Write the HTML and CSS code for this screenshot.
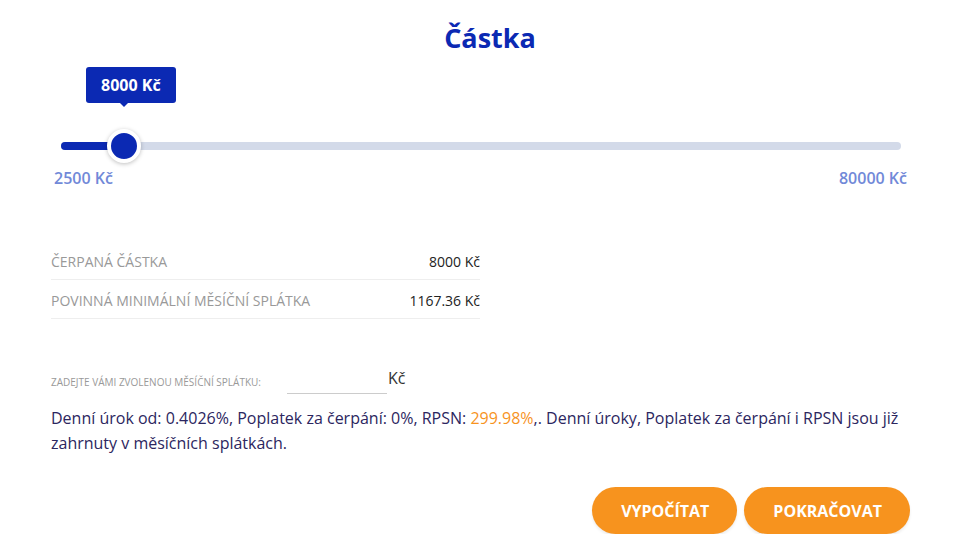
FILE: index.html
```html
<!DOCTYPE html>
<html lang="cs">

<head>
    <meta charset="UTF-8">
    <meta name="viewport" content="width=device-width, initial-scale=1.0">
    <title>Kalkulačka půjčky</title>
    <link rel="stylesheet" href="styles.css">
</head>

<body>
    <div class="calc">
        <h1 class="calc-title">Částka</h1>

        <div class="amount">
            <div class="range">
                <div class="range-fill" style="width: 64px;"></div>
                <div class="range-thumb" style="left: 63px;">
                    <span class="range-tip">8000 Kč</span>
                </div>
            </div>
            <div class="range-labels">
                <span>2500 Kč</span>
                <span>80000 Kč</span>
            </div>
        </div>

        <table class="summary">
            <tr>
                <td class="summary-label">Čerpaná částka</td>
                <td class="summary-value">8000 Kč</td>
            </tr>
            <tr>
                <td class="summary-label">Povinná minimální měsíční splátka</td>
                <td class="summary-value">1167.36 Kč</td>
            </tr>
        </table>

        <div class="own-payment">
            <label for="payment">Zadejte vámi zvolenou měsíční splátku:</label>
            <input type="text" id="payment">
            <span class="currency">Kč</span>
        </div>

        <p class="note">Denní úrok od: 0.4026%, Poplatek za čerpání: 0%, RPSN: <span class="hl">299.98%</span>,. Denní úroky, Poplatek za čerpání i RPSN jsou již zahrnuty v měsíčních splátkách.</p>

        <div class="actions">
            <button class="btn">Vypočítat</button>
            <button class="btn">Pokračovat</button>
        </div>
    </div>
</body>

</html>
```

FILE: styles.css
```css
body {
    margin: 0;
    font-family: 'Open Sans', sans-serif;
    background: #fff;
    color: #333;
}

.calc {
    padding: 20px 54px 0 51px;
}

.calc-title {
    margin: 0;
    text-align: center;
    font-size: 27px;
    line-height: 36px;
    font-weight: 700;
    color: #0b29b3;
    padding-left: 18px;
}

.amount {
    padding-top: 86px;
}

.range {
    position: relative;
    height: 8px;
    margin: 0 10px 0 10px;
    background: #d3dae9;
    border-radius: 4px;
}

.range-fill {
    height: 100%;
    background: #0b29b3;
    border-radius: 4px 0 0 4px;
}

.range-thumb {
    position: absolute;
    top: 50%;
    width: 26px;
    height: 26px;
    margin: -17px 0 0 -17px;
    background: #0b29b3;
    border: 4px solid #fff;
    border-radius: 50%;
    box-shadow: 0 1px 4px rgba(0, 0, 0, 0.25);
}

.range-tip {
    position: absolute;
    bottom: 56px;
    left: -25px;
    padding: 0 15px;
    height: 36px;
    line-height: 36px;
    white-space: nowrap;
    background: #0b29b3;
    color: #fff;
    font-size: 16px;
    font-weight: 700;
    border-radius: 3px;
}

.range-tip::after {
    content: "";
    position: absolute;
    top: 100%;
    left: 38px;
    margin-left: -4px;
    border: 4px solid transparent;
    border-top-color: #0b29b3;
}

.range-labels {
    display: flex;
    justify-content: space-between;
    margin: 16px 4px 0 3px;
    font-size: 16px;
    font-weight: 600;
    line-height: 24px;
    color: #7189d8;
}

.summary {
    margin-top: 51px;
    width: 429px;
    border-collapse: collapse;
    font-size: 14px;
    line-height: 18px;
}

.summary td {
    padding: 12px 0 8px;
    border-bottom: 1px solid #eee;
}

.summary-label {
    text-transform: uppercase;
    color: #999;
}

.summary-value {
    text-align: right;
    color: #222;
    font-weight: 500;
}

.own-payment {
    display: flex;
    align-items: flex-end;
    margin-top: 50px;
}

.own-payment label {
    font-size: 10px;
    text-transform: uppercase;
    color: #999;
    width: 236px;
    padding-bottom: 5px;
}

.own-payment input {
    width: 100px;
    height: 24px;
    padding: 0;
    border: none;
    border-bottom: 1px solid #ccc;
    outline: none;
    font: inherit;
}

.currency {
    align-self: flex-start;
    font-size: 16px;
    color: #333;
    margin-left: 1px;
    line-height: 18px;
}

.note {
    margin: 12px 0 0;
    font-size: 16px;
    line-height: 25px;
    color: #2c2660;
    max-width: 860px;
}

.hl {
    color: #f7931e;
}

.actions {
    display: flex;
    justify-content: flex-end;
    gap: 7px;
    margin: 31px 1px 0 0;
}

.btn {
    height: 47px;
    padding: 0 28px 0 29px;
    background-color: #f7931e;
    color: #fff;
    border: none;
    border-radius: 24px;
    font-family: inherit;
    font-size: 16px;
    font-weight: 700;
    text-transform: uppercase;
    cursor: pointer;
    box-shadow: 0 2px 3px rgba(0, 0, 0, 0.08);
}
```
